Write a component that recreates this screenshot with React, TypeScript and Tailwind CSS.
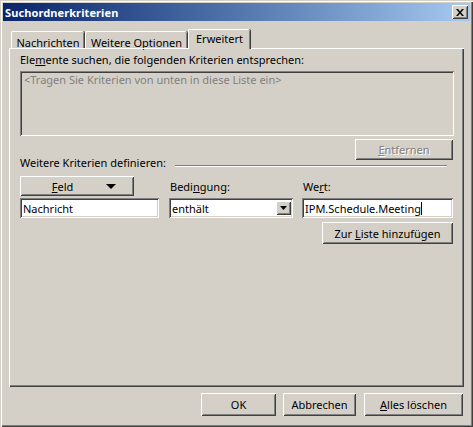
const raised =
	'shadow-[inset_1px_1px_#ffffff,inset_-1px_-1px_#404040,inset_2px_2px_#d4d0c8,inset_-2px_-2px_#808080]';
const sunken =
	'shadow-[inset_1px_1px_#808080,inset_-1px_-1px_#ffffff,inset_2px_2px_#404040,inset_-2px_-2px_#d4d0c8]';
const disabledText = 'text-[#808080] [text-shadow:1px_1px_0_#ffffff]';

function Btn({ children, className = '' }: { children: React.ReactNode; className?: string }) {
	return (
		<div className={`flex items-center justify-center bg-[#d4d0c8] ${raised} ${className}`}>
			{children}
		</div>
	);
}

function Tab({ label, active = false, className = '' }: { label: string; active?: boolean; className?: string }) {
	return (
		<div
			className={`flex justify-center bg-[#d4d0c8] rounded-t-[2px] border-l border-t border-white shadow-[inset_-1px_0_#808080,1px_0_#404040] ${
				active ? 'h-[20px] -mb-px relative z-10 pt-[1px]' : 'h-[17px] pt-[3px]'
			} ${className}`}
		>
			{label}
		</div>
	);
}

export default function App() {
	return (
		<div
			className={`w-[473px] h-[427px] bg-[#d4d0c8] flex flex-col text-[11px] leading-[15px] text-black shadow-[inset_1px_1px_#d4d0c8,inset_2px_2px_#ffffff,inset_-1px_-1px_#404040,inset_-2px_-2px_#808080] font-['Segoe_UI','Noto_Sans',sans-serif]`}
		>
			{/* Title bar */}
			<div className="mx-[3px] mt-[3px] h-[18px] bg-gradient-to-r from-[#0a246a] to-[#a6caf0] flex items-center justify-between pl-[2px] pr-[2px]">
				<span className="text-white font-bold text-[11px] tracking-[0.1px]">Suchordnerkriterien</span>
				<div className={`w-[16px] h-[14px] bg-[#d4d0c8] flex items-center justify-center ${raised}`}>
					<svg width="8" height="7" viewBox="0 0 8 7">
						<path d="M0 0h2l2 2.5L6 0h2L5 3.5 8 7H6L4 4.5 2 7H0l3-3.5z" fill="#000" />
					</svg>
				</div>
			</div>

			{/* Tabs */}
			<div className="ml-[11px] mt-[8px] h-[19px] flex items-end">
				<Tab label="Nachrichten" className="w-[73px]" />
				<Tab label="Weitere Optionen" className="w-[102px] ml-[1px]" />
				<Tab label="Erweitert" active className="w-[62px] ml-[1px]" />
			</div>

			{/* Panel */}
			<div
				className={`ml-[9px] w-[455px] h-[339px] flex flex-col pl-[11px] pr-[10px] pt-[4px] shadow-[inset_1px_1px_#ffffff,inset_-1px_-1px_#404040,inset_-2px_-2px_#808080]`}
			>
				<div>
					Ele<span className="underline">m</span>ente suchen, die folgenden Kriterien entsprechen:
				</div>
				<div className={`mt-[4px] h-[65px] bg-[#d4d0c8] ${sunken} pl-[4px] pt-[1px] text-[#808080]`}>
					&lt;Tragen Sie Kriterien von unten in diese Liste ein&gt;
				</div>
				<div className="flex justify-end mt-[3px] pr-[1px]">
					<Btn className={`w-[98px] h-[21px] ${disabledText}`}>
						<span>
							<span className="underline">E</span>ntfernen
						</span>
					</Btn>
				</div>
				<div className="flex items-start -mt-[5px]">
					<span>Weitere Kriterien definieren:</span>
					<div className="flex-1 ml-[9px] mr-[7px] mt-[10px] h-[2px] border-t border-[#808080] border-b border-b-white" />
				</div>

				{/* Criteria row */}
				<div className="flex mt-[6px]">
					<div className="w-[139px] flex flex-col">
						<Btn className="w-[114px] h-[20px]">
							<span className="ml-[14px]">
								<span className="underline">F</span>eld
							</span>
							<svg className="ml-[33px]" width="10" height="5" viewBox="0 0 10 5">
								<path d="M0 0h10L5 5z" fill="#000" />
							</svg>
						</Btn>
						<div className={`mt-[2px] h-[20px] bg-white ${sunken} pl-[3px] pt-[3px]`}>Nachricht</div>
					</div>
					<div className="w-[124px] ml-[10px] flex flex-col">
						<div className="h-[20px] pt-[3px] pl-[1px]">
							Bedi<span className="underline">n</span>gung:
						</div>
						<div className={`mt-[2px] h-[20px] bg-white ${sunken} flex items-start pl-[2px] pr-[2px] pt-[3px]`}>
							<span className="flex-1 pl-[1px]">enthält</span>
							<Btn className="w-[15px] h-[14px]">
								<svg width="7" height="4" viewBox="0 0 7 4">
									<path d="M0 0h7L3.5 4z" fill="#000" />
								</svg>
							</Btn>
						</div>
					</div>
					<div className="w-[151px] ml-[9px] flex flex-col">
						<div className="h-[20px] pt-[3px] pl-[1px]">
							We<span className="underline">r</span>t:
						</div>
						<div className={`mt-[2px] h-[20px] bg-white ${sunken} pl-[3px] pt-[3px] flex items-start`}>
							<span>IPM.Schedule.Meeting</span>
							<span className="w-px h-[13px] bg-black mt-[1px]" />
						</div>
						<div className="flex justify-end mt-[4px]">
							<Btn className="w-[131px] h-[22px]">
								<span>
									Zur <span className="underline">L</span>iste hinzufügen
								</span>
							</Btn>
						</div>
					</div>
				</div>
			</div>

			{/* Bottom buttons */}
			<div className="flex justify-end mt-[6px] pr-[10px]">
				<Btn className="w-[75px] h-[23px]">OK</Btn>
				<Btn className="w-[73px] h-[23px] ml-[7px]">Abbrechen</Btn>
				<Btn className="w-[99px] h-[23px] ml-[8px]">
					<span>
						<span className="underline">A</span>lles löschen
					</span>
				</Btn>
			</div>
		</div>
	);
}
